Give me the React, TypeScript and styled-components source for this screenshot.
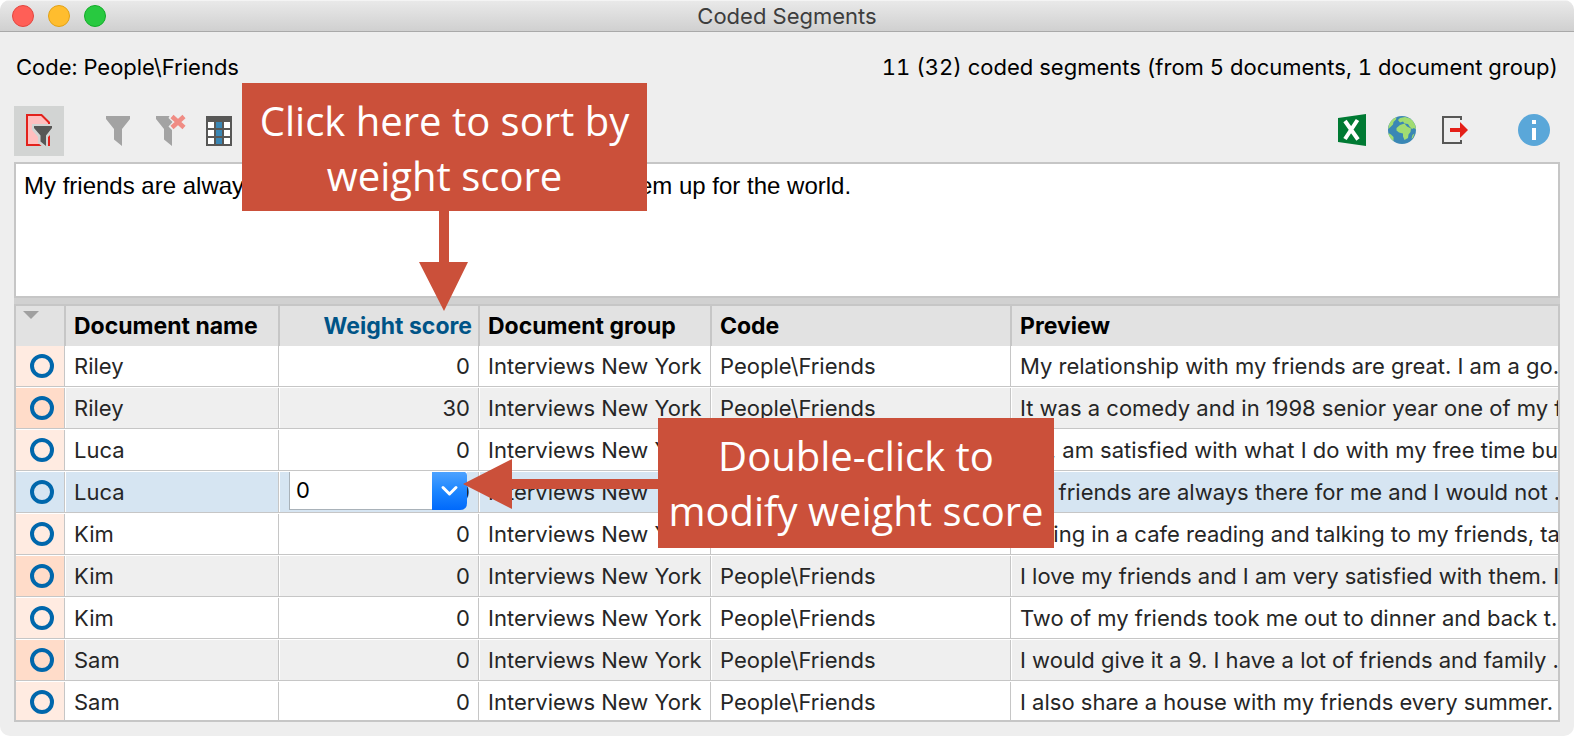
import React from "react";
import styled, { createGlobalStyle } from "styled-components";

const line = "#c6c6c6";
const accent = "#cb503a";

const GlobalStyle = createGlobalStyle`
  *, *::before, *::after { box-sizing: border-box; }
  body { margin: 0; background: #fff; }
`;

const Window = styled.main`
  position: relative;
  display: flex;
  flex-direction: column;
  height: 100vh;
  min-width: 1200px;
  overflow: hidden;
  background: #eeeeee;
  border-radius: 10px;
  color: #000;
  font-family: Inter, "Liberation Sans", sans-serif;
  font-size: 22px;
  line-height: 28px;
`;

const TitleBar = styled.header`
  display: grid;
  grid-template-columns: 1fr auto 1fr;
  align-items: center;
  flex: none;
  height: 32px;
  padding: 0 12px;
  background: linear-gradient(#e9e9e9, #d0d0d0);
  border-top: 1px solid #f4f4f4;
  border-bottom: 1px solid #a9a9a9;
`;

const Lights = styled.div`
  display: flex;
  gap: 14px;
`;

const Light = styled.button<{ $fill: string; $edge: string }>`
  width: 22px;
  height: 22px;
  padding: 0;
  border: 1px solid ${(p) => p.$edge};
  border-radius: 50%;
  background: ${(p) => p.$fill};
`;

const Title = styled.h1`
  margin: 0;
  color: #3d3d3d;
  font-size: 22px;
  font-weight: 400;
  line-height: 28px;
`;

const Summary = styled.div`
  display: flex;
  justify-content: space-between;
  flex: none;
  padding: 21px 16px 25px;
  font-variant-numeric: tabular-nums;
`;

const Toolbar = styled.div`
  display: flex;
  flex: none;
  justify-content: space-between;
  padding: 0 14px 6px;
`;

const ToolGroup = styled.div`
  display: flex;
`;

const Tool = styled.button<{ $active?: boolean; $after?: number; $before?: number }>`
  width: 50px;
  height: 50px;
  margin-right: ${(p) => p.$after ?? 0}px;
  margin-left: ${(p) => p.$before ?? 0}px;
  padding: 0;
  border: 0;
  background: ${(p) => (p.$active ? "#d2d4d3" : "transparent")};

  svg { display: block; }
`;

const Segment = styled.textarea`
  display: block;
  flex: none;
  height: 136px;
  margin: 0 14px;
  padding: 8px;
  border: 2px solid ${line};
  border-radius: 0;
  outline: 0;
  resize: none;
  background: #fff;
  color: #000;
  font-family: "Liberation Sans", Arial, sans-serif;
  font-size: 24px;
  line-height: 28px;
`;

const Splitter = styled.div`
  flex: none;
  height: 6px;
  margin: 0 14px;
  background: #d1d1d1;
`;

const TablePane = styled.div`
  flex: 1;
  min-height: 0;
  margin: 0 14px 14px;
  overflow: hidden;
  border: 2px solid ${line};
  background: #fff;
`;

const Table = styled.table`
  width: 100%;
  table-layout: fixed;
  border-collapse: separate;
  border-spacing: 0;
`;

const Col = styled.col<{ $w?: number }>`
  width: ${(p) => (p.$w ? `${p.$w}px` : "auto")};
`;

const HeadCell = styled.th<{ $right?: boolean }>`
  height: 40px;
  padding: 0 6px 0 8px;
  border-right: 2px solid ${line};
  background: #e2e2e2;
  color: ${(p) => (p.$right ? "#005487" : "#000")};
  font-size: 23px;
  font-weight: 700;
  text-align: ${(p) => (p.$right ? "right" : "left")};
  white-space: nowrap;

  &:last-child { border-right: 0; }
`;

const SortHead = styled(HeadCell)`
  padding: 5px 7px;
  vertical-align: top;

  svg { display: block; }
`;

const Cell = styled.td<{ $right?: boolean }>`
  position: relative;
  height: 42px;
  padding: 0 10px 2px 8px;
  overflow: hidden;
  box-shadow: inset 0 -1px #fff, inset 0 -2px ${line}, inset -1px 0 #fff, inset -2px 0 ${line};
  text-align: ${(p) => (p.$right ? "right" : "left")};
  white-space: nowrap;

  &:last-child {
    padding-right: 0;
    box-shadow: inset 0 -1px #fff, inset 0 -2px ${line};
  }
`;

const MarkCell = styled(Cell)`
  padding: 0 0 2px 14px;
`;

const Mark = styled.span`
  display: block;
  width: 24px;
  height: 24px;
  border: 4px solid #0067ac;
  border-radius: 50%;
`;

const Row = styled.tr<{ $selected?: boolean }>`
  background: ${(p) => (p.$selected ? "#d6e5f2" : "#fff")};
  color: #262626;

  ${MarkCell} { background: ${(p) => (p.$selected ? "#d6e5f2" : "#ffebe1")}; }

  &:nth-child(even) { background: ${(p) => (p.$selected ? "#d6e5f2" : "#efefef")}; }
  &:nth-child(even) ${MarkCell} { background: ${(p) => (p.$selected ? "#d6e5f2" : "#ffdcc9")}; }
`;

const Combo = styled.div`
  position: absolute;
  top: 0;
  right: 13px;
  width: 178px;
  height: 38px;

  svg {
    position: absolute;
    top: 0;
    right: 0;
    pointer-events: none;
  }
`;

const ComboSelect = styled.select`
  display: block;
  width: 100%;
  height: 100%;
  padding: 0 42px 2px 6px;
  appearance: none;
  border: 1px solid #a9b2b9;
  border-top: 0;
  border-right: 0;
  border-radius: 0 0 7px 0;
  outline: 0;
  background: #fff;
  color: #000;
  font: inherit;
`;

const Callout = styled.aside<{ $x: number; $y: number; $w: number; $h: number }>`
  position: absolute;
  top: ${(p) => p.$y}px;
  left: ${(p) => p.$x}px;
  width: ${(p) => p.$w}px;
  height: ${(p) => p.$h}px;
  padding-top: 10px;
  background: ${accent};
  color: #fff;
  font-family: "Open Sans", "Noto Sans", sans-serif;
  font-size: 40px;
  line-height: 55px;
  text-align: center;
  white-space: nowrap;
`;

const DownArrow = styled.svg`
  position: absolute;
  top: 100%;
  left: 177px;
`;

const LeftArrow = styled.svg`
  position: absolute;
  top: 41px;
  right: 100%;
`;

const FilterDocIcon = () => (
  <svg width="50" height="50" viewBox="0 0 50 50" aria-hidden="true">
    <path d="M13 9H27.5L35 16.5V39H13Z" fill="#ffbfbf" stroke="#e2211c" strokeWidth="2" />
    <path d="M18 18H41V24L34 31V42H30L24 37V31L18 24Z" fill="#d2d4d3" />
    <path d="M20 20H38V22L32 29.5V40L26.5 35.5V29.5L20 22Z" fill="#575756" />
    <path d="M34 32H36V40H34Z" fill="#e2211c" />
  </svg>
);

const FilterIcon = () => (
  <svg width="50" height="50" viewBox="0 0 50 50" aria-hidden="true">
    <path d="M13 10H37V13L29 23V40L21 33.5V23L13 13Z" fill="#a3a3a3" />
  </svg>
);

const ClearFilterIcon = () => (
  <svg width="50" height="50" viewBox="0 0 50 50" aria-hidden="true">
    <path d="M13 10H26.5L25.5 12L29.5 16L25.5 20.5L29 24V40L21 33.5V23L13 13Z" fill="#a3a3a3" />
    <path d="M29 10.5L41 21.5M41 10.5L29 21.5" stroke="#f08c84" strokeWidth="4.5" fill="none" />
  </svg>
);

const ColumnsIcon = () => (
  <svg width="50" height="50" viewBox="0 0 50 50" aria-hidden="true">
    <path d="M13 10H39V40H13Z" fill="#575756" />
    {[16, 24, 32].map((y) => (
      <g key={y}>
        <rect x="15" y={y} width="6" height="6" fill="#fff" />
        <rect x="23" y={y} width="6" height="6" fill="#3a87b5" />
        <rect x="31" y={y} width="6" height="6" fill="#fff" />
      </g>
    ))}
  </svg>
);

const ExcelIcon = () => (
  <svg width="50" height="50" viewBox="0 0 50 50" aria-hidden="true">
    <path d="M10 12L38 8V40L10 36Z" fill="#007a33" />
    <path d="M17 15L30 33.5M29.5 14L17 33" stroke="#fff" strokeWidth="4" fill="none" />
  </svg>
);

const GlobeIcon = () => (
  <svg width="50" height="50" viewBox="0 0 50 50" aria-hidden="true">
    <circle cx="24" cy="24" r="14" fill="#3a87b5" />
    <path d="M10.5 21C11.5 16 14.5 12.5 18.5 11.2L18 13.5L15.5 16L15 18.5L12.5 21L10.3 23Z" fill="#a1dc72" />
    <path d="M20 14L22 12L27 11L32 12.5C36 15.5 37.8 19 38 23.5L36 22L34 23L31.5 20.5L30 18L26.5 17.5L25 15.5L22 16.5Z" fill="#a1dc72" />
    <path d="M18.5 22L22 19L26.5 17.5L29 20.5L33 22.5L32.5 26L30.5 28.5L30 32L26.5 34L25 30.5V27.5L21 26.5L18.500 24.500Z" fill="#a1dc72" />
    <path d="M10.3 27L13 28.5L15.5 31V35C12.5 33 10.8 30 10.3 27Z" fill="#a1dc72" />
    <path d="M34.5 29L36.500 27.5L35 31.5L33.5 33Z" fill="#a1dc72" />
  </svg>
);

const ExportIcon = () => (
  <svg width="50" height="50" viewBox="0 0 50 50" aria-hidden="true">
    <path d="M33 14V11H15V37H33V34" fill="none" stroke="#575756" strokeWidth="2" />
    <path d="M22 22H32V16L40 24L32 32V26H22Z" fill="#e41f18" />
  </svg>
);

const InfoIcon = () => (
  <svg width="50" height="50" viewBox="0 0 50 50" aria-hidden="true">
    <circle cx="24" cy="24" r="16" fill="#5aa7d9" />
    <path d="M22 14H26V18H22ZM22 22H26V34H22Z" fill="#fff" />
  </svg>
);

type Segmented = { name: string; score: number; preview: string; selected?: boolean };

const segments: Segmented[] = [
  { name: "Riley", score: 0, preview: "My relationship with my friends are great. I am a go..." },
  { name: "Riley", score: 30, preview: "It was a comedy and in 1998 senior year one of my friends" },
  { name: "Luca", score: 0, preview: "No, am satisfied with what I do with my free time but" },
  { name: "Luca", score: 0, preview: "My friends are always there for me and I would not ...", selected: true },
  { name: "Kim", score: 0, preview: "Sitting in a cafe reading and talking to my friends, taking" },
  { name: "Kim", score: 0, preview: "I love my friends and I am very satisfied with them. I" },
  { name: "Kim", score: 0, preview: "Two of my friends took me out to dinner and back t..." },
  { name: "Sam", score: 0, preview: "I would give it a 9. I have a lot of friends and family ..." },
  { name: "Sam", score: 0, preview: "I also share a house with my friends every summer." },
];

const ScoreEditor = () => (
  <Combo>
    <ComboSelect aria-label="Weight score" defaultValue="0">
      <option>0</option>
      <option>30</option>
      <option>100</option>
    </ComboSelect>
    <svg width="35" height="38" viewBox="0 0 35 38" aria-hidden="true">
      <defs>
        <linearGradient id="combo" x1="0" y1="0" x2="0" y2="1">
          <stop offset="0" stopColor="#4da2ff" />
          <stop offset="0.5" stopColor="#1c86ff" />
          <stop offset="1" stopColor="#0069fb" />
        </linearGradient>
      </defs>
      <path d="M0 0H33Q35 1 35 3V31Q35 38 28 38H0Z" fill="url(#combo)" />
      <path d="M11 15.5L17.5 22L24 15.5" fill="none" stroke="#fff" strokeWidth="3" strokeLinecap="round" strokeLinejoin="round" />
    </svg>
  </Combo>
);

export default function App() {
  return (
    <>
      <GlobalStyle />
      <Window>
        <TitleBar>
          <Lights>
            <Light aria-label="Close" $fill="#ff5f57" $edge="#e2463f" />
            <Light aria-label="Minimize" $fill="#ffbd2e" $edge="#e1a116" />
            <Light aria-label="Zoom" $fill="#28c940" $edge="#12ac28" />
          </Lights>
          <Title>Coded Segments</Title>
        </TitleBar>

        <Summary>
          <span>Code: People\Friends</span>
          <span>11 (32) coded segments (from 5 documents, 1 document group)</span>
        </Summary>

        <Toolbar>
          <ToolGroup>
            <Tool aria-label="Only activated documents" $active $after={29}><FilterDocIcon /></Tool>
            <Tool aria-label="Filter"><FilterIcon /></Tool>
            <Tool aria-label="Reset filters"><ClearFilterIcon /></Tool>
            <Tool aria-label="Select columns"><ColumnsIcon /></Tool>
          </ToolGroup>
          <ToolGroup>
            <Tool aria-label="Open as Excel table"><ExcelIcon /></Tool>
            <Tool aria-label="Open as web page"><GlobeIcon /></Tool>
            <Tool aria-label="Export"><ExportIcon /></Tool>
            <Tool aria-label="Help" $before={32}><InfoIcon /></Tool>
          </ToolGroup>
        </Toolbar>

        <Segment
          readOnly
          aria-label="Coded segment"
          value="My friends are always there for me and I would not give them up for the world."
        />
        <Splitter />

        <TablePane>
          <Table>
            <colgroup>
              <Col $w={50} />
              <Col $w={214} />
              <Col $w={200} />
              <Col $w={232} />
              <Col $w={300} />
              <Col />
            </colgroup>
            <thead>
              <tr>
                <SortHead aria-label="Marker">
                  <svg width="16" height="8" viewBox="0 0 16 8" aria-hidden="true">
                    <path d="M0 0H16L8 8Z" fill="#a0a0a0" />
                  </svg>
                </SortHead>
                <HeadCell>Document name</HeadCell>
                <HeadCell $right>Weight score</HeadCell>
                <HeadCell>Document group</HeadCell>
                <HeadCell>Code</HeadCell>
                <HeadCell>Preview</HeadCell>
              </tr>
            </thead>
            <tbody>
              {segments.map((s, i) => (
                <Row key={i} $selected={s.selected}>
                  <MarkCell><Mark /></MarkCell>
                  <Cell>{s.name}</Cell>
                  <Cell $right>
                    {s.score}
                    {s.selected && <ScoreEditor />}
                  </Cell>
                  <Cell>Interviews New York</Cell>
                  <Cell>People\Friends</Cell>
                  <Cell>{s.preview}</Cell>
                </Row>
              ))}
            </tbody>
          </Table>
        </TablePane>

        <Callout $x={242} $y={83} $w={405} $h={128}>
          Click here to sort by
          <br />
          weight score
          <DownArrow width="49" height="100" viewBox="0 0 49 100" aria-hidden="true">
            <path d="M20 0H30V51H49L25 100L0 51H20Z" fill={accent} />
          </DownArrow>
        </Callout>
        <Callout $x={658} $y={418} $w={396} $h={130}>
          Double-click to
          <br />
          modify weight score
          <LeftArrow width="195" height="50" viewBox="0 0 195 50" aria-hidden="true">
            <path d="M195 20H49V0L0 25L49 50V30H195Z" fill={accent} />
          </LeftArrow>
        </Callout>
      </Window>
    </>
  );
}
